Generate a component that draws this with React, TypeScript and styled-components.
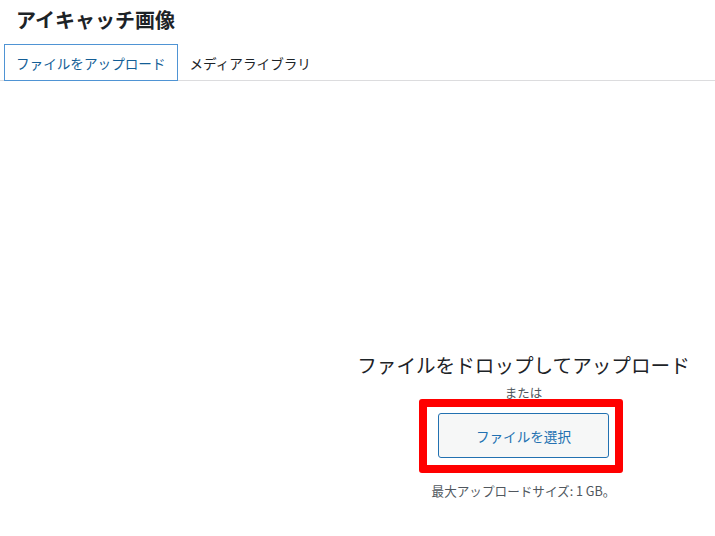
import React from "react";
import styled, { createGlobalStyle } from "styled-components";

const Global = createGlobalStyle`
  html, body { margin: 0; padding: 0; background: #ffffff; }
  body { font-family: "Noto Sans CJK JP", "Noto Sans", "Liberation Sans", sans-serif; color: #1d2327; }
`;

const Page = styled.div`
  width: 715px;
  height: 536px;
  overflow: hidden;
  display: flex;
  flex-direction: column;
`;

const Title = styled.h1`
  margin: 0;
  padding: 6px 16px 0 16px;
  height: 38px;
  box-sizing: border-box;
  font-size: 20px;
  line-height: 28px;
  font-weight: 700;
  color: #1d2327;
`;

const TabBar = styled.div`
  display: flex;
  align-items: flex-start;
  padding-left: 4px;
  margin-top: 6px;
  border-bottom: 1px solid #dcdcde;
  height: 36px;
`;

const Tab = styled.div<{ $active?: boolean }>`
  display: flex;
  align-items: center;
  padding: 0 11px;
  box-sizing: border-box;
  height: 37px;
  font-size: 13.6px;
  color: ${(p) => (p.$active ? "#135e96" : "#1d2327")};
  border: 1px solid ${(p) => (p.$active ? "#4f94d4" : "transparent")};
  background: ${(p) => (p.$active ? "#ffffff" : "transparent")};
  white-space: nowrap;
  position: relative;
`;

const UploadArea = styled.div`
  flex: 1;
  display: flex;
  justify-content: center;
  padding-left: 332px;
  padding-top: 270px;
`;

const Column = styled.div`
  display: flex;
  flex-direction: column;
  align-items: center;
  text-align: center;
`;

const DropText = styled.div`
  font-size: 19.6px;
  line-height: 28px;
  color: #1d2327;
  white-space: nowrap;
`;

const OrText = styled.div`
  margin-top: 5px;
  font-size: 12.5px;
  line-height: 18px;
  color: #50575e;
`;

const ButtonWrap = styled.div`
  position: relative;
  margin-top: 11px;
`;

const SelectButton = styled.button`
  width: 171px;
  height: 45px;
  box-sizing: border-box;
  border: 1px solid #2271b1;
  border-radius: 3px;
  background: #f6f7f7;
  color: #2271b1;
  font-family: inherit;
  font-size: 13.6px;
  cursor: pointer;
`;

const Highlight = styled.div`
  position: absolute;
  left: -19px;
  top: -14px;
  right: -14px;
  bottom: -15px;
  border: 8px solid #ff0000;
  border-radius: 3px;
  pointer-events: none;
`;

const MaxText = styled.div`
  margin-top: 24px;
  font-size: 12.6px;
  line-height: 18px;
  color: #50575e;
  white-space: nowrap;
`;

export default function App() {
  return (
    <>
      <Global />
      <Page>
        <Title>アイキャッチ画像</Title>
        <TabBar>
          <Tab $active>ファイルをアップロード</Tab>
          <Tab>メディアライブラリ</Tab>
        </TabBar>
        <UploadArea>
          <Column>
            <DropText>ファイルをドロップしてアップロード</DropText>
            <OrText>または</OrText>
            <ButtonWrap>
              <SelectButton>ファイルを選択</SelectButton>
              <Highlight />
            </ButtonWrap>
            <MaxText>最大アップロードサイズ: 1 GB。</MaxText>
          </Column>
        </UploadArea>
      </Page>
    </>
  );
}
